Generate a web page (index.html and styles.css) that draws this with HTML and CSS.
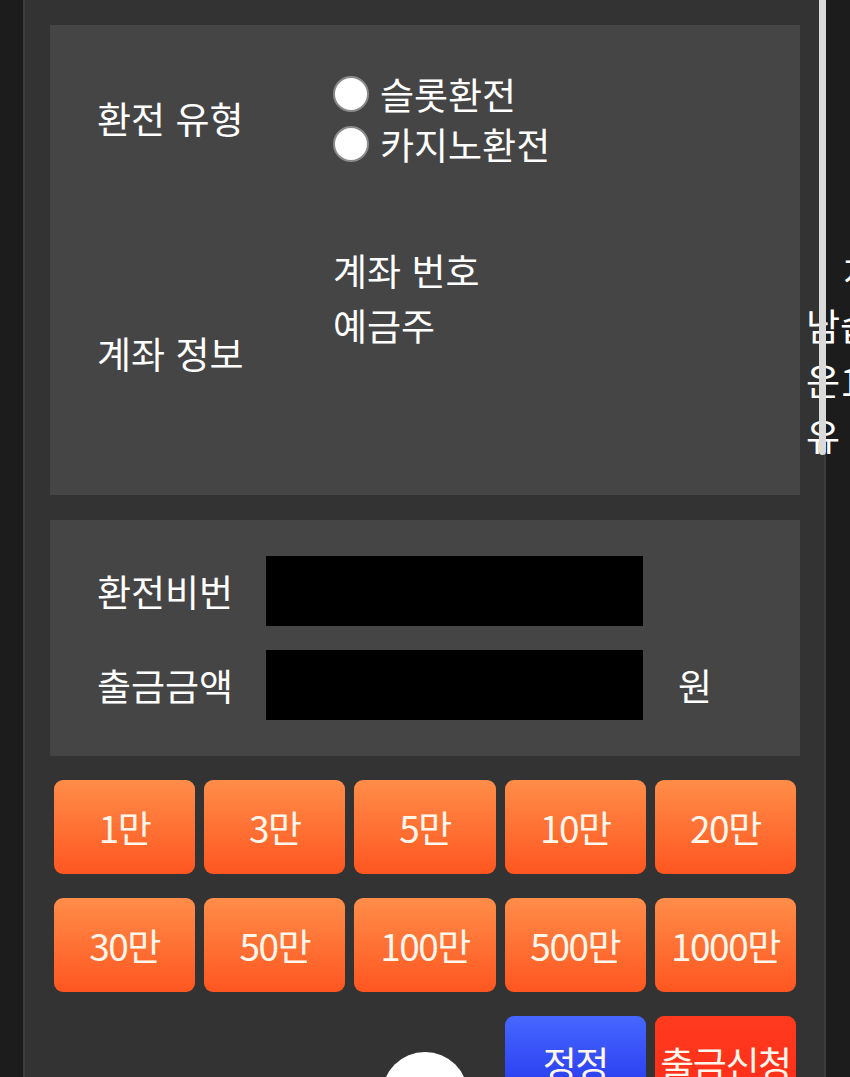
FILE: index.html
```html
<!DOCTYPE html>
<html lang="ko">
<head>
  <meta charset="UTF-8">
  <meta name="viewport" content="width=device-width, initial-scale=1.0">
  <title>환전 신청</title>
  <link rel="stylesheet" href="styles.css">
</head>
<body>

  <div class="wrap">
    <div class="panel info">
      <div class="label">환전 유형</div>
      <div class="radios">
        <label class="opt"><input type="radio" name="type"> 슬롯환전</label>
        <label class="opt"><input type="radio" name="type"> 카지노환전</label>
      </div>

      <div class="label">계좌 정보</div>
      <div class="account">
        <div class="line"><span class="k">계좌 번호</span><span class="v">&#12288;처리</span></div>
        <div class="line"><span class="k">예금주</span><span class="v">남습니다</span></div>
        <div class="line"><span class="k"></span><span class="v">운1</span></div>
        <div class="line"><span class="k"></span><span class="v">유</span></div>
      </div>
    </div>

    <div class="panel form">
      <div class="label">환전비번</div>
      <input class="box" type="password">
      <div></div>

      <div class="label">출금금액</div>
      <input class="box" type="text">
      <div class="unit">원</div>
    </div>

    <div class="amounts">
      <button class="amt">1만</button>
      <button class="amt">3만</button>
      <button class="amt">5만</button>
      <button class="amt">10만</button>
      <button class="amt">20만</button>
      <button class="amt">30만</button>
      <button class="amt">50만</button>
      <button class="amt">100만</button>
      <button class="amt">500만</button>
      <button class="amt">1000만</button>
      <div></div>
      <div></div>
      <div></div>
      <button class="amt fix">정정</button>
      <button class="amt submit">출금신청</button>
    </div>
  </div>

  <div class="scrollbar"></div>
  <div class="bubble"></div>

</body>
</html>
```

FILE: styles.css
```css
html, body {
  overflow: hidden;
}
body {
  margin: 0;
  background: #1c1c1c;
  color: #fff;
  font-family: "Noto Sans CJK KR", "Noto Sans", sans-serif;
  font-size: 37px;
}
.wrap {
  margin-left: 23px;
  width: 750px;
  min-height: 1100px;
  background: #333;
  border-left: 2px solid #3d3d3d;
  border-right: 2px solid #3d3d3d;
  padding: 25px 24px 0 25px;
}
.panel {
  background: #454545;
  padding: 0 47px;
}
.info {
  display: grid;
  grid-template-columns: 236px 1fr;
  grid-template-rows: 185px 285px;
  align-items: center;
}
.label {
  white-space: nowrap;
}
.radios {
  display: flex;
  flex-direction: column;
  padding-top: 2px;
}
.opt {
  display: flex;
  align-items: center;
  gap: 11px;
  height: 50px;
  white-space: nowrap;
}
.opt input {
  appearance: none;
  flex: none;
  width: 36px;
  height: 36px;
  margin: 0;
  border-radius: 50%;
  background: #fff;
  border: 2px solid #8a8a8a;
}
.account .line {
  display: flex;
  height: 55px;
  align-items: center;
  white-space: nowrap;
}
.account .k {
  width: 473px;
  flex: none;
}
.form {
  margin-top: 25px;
  display: grid;
  grid-template-columns: 169px 377px 1fr;
  row-gap: 24px;
  align-items: center;
  padding-top: 36px;
  padding-bottom: 36px;
}
.box {
  height: 70px;
  margin: 0;
  border: none;
  background: #000;
  color: #fff;
  font-size: 28px;
  box-sizing: border-box;
}
.unit {
  padding-left: 35px;
}
.amounts {
  margin-top: 24px;
  padding: 0 4px;
  display: grid;
  grid-template-columns: repeat(5, 1fr);
  column-gap: 9px;
  row-gap: 24px;
  grid-auto-rows: 94px;
}
.amt {
  border: none;
  border-radius: 9px;
  background: linear-gradient(#ff8d49, #ff5620);
  color: #fff6ec;
  font-family: "Noto Sans CJK KR", "Noto Sans", sans-serif;
  font-size: 37px;
  padding: 0;
  letter-spacing: -1.5px;
  white-space: nowrap;
}
.fix {
  background: linear-gradient(#4667ff, #2030ec);
}
.submit {
  background: linear-gradient(#ff3b1f, #ff2a16);
}
.scrollbar {
  position: absolute;
  left: 819px;
  top: 0;
  width: 7px;
  height: 455px;
  background: #dadada;
  border-radius: 0 0 4px 4px;
}
.bubble {
  position: absolute;
  left: 382px;
  top: 1052px;
  width: 86px;
  height: 86px;
  border-radius: 50%;
  background: #fff;
}
```
